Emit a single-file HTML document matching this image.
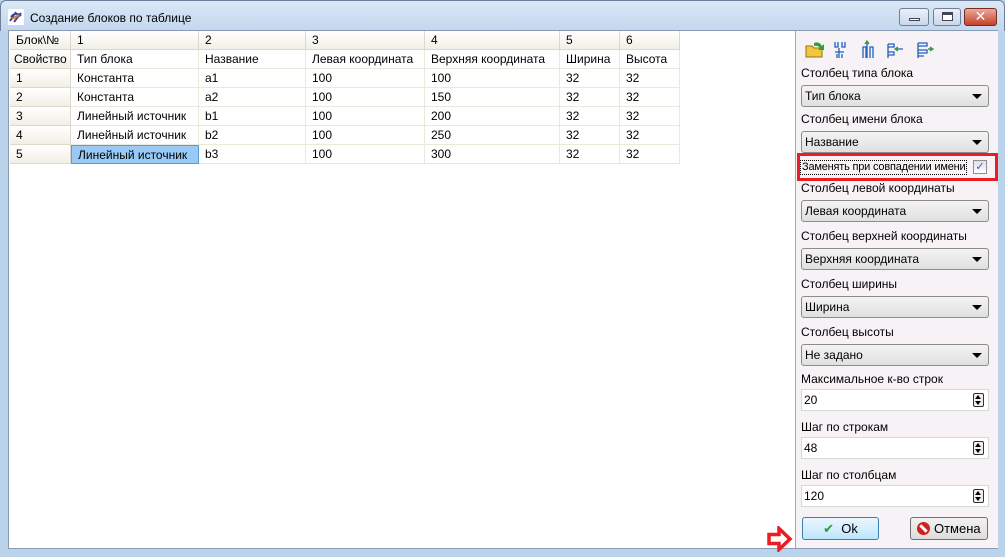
<!DOCTYPE html>
<html><head><meta charset="utf-8"><style>
*{margin:0;padding:0;box-sizing:border-box}
body{width:1005px;height:557px;overflow:hidden;background:#bcd3ec;font-family:"Liberation Sans","DejaVu Sans",sans-serif;font-size:12px;color:#000;position:relative}
.a{position:absolute}
.title{left:0;top:0;width:1005px;height:31px;background:linear-gradient(#dbe8f6,#c2d7ee);border:1px solid #6d7f99;border-bottom:none;border-radius:6px 6px 0 0}
.client{left:8px;top:30px;width:990px;height:519px;background:#fff;border:1px solid #8a9bb3}
.cell{position:absolute;height:19px;line-height:18px;padding-left:6px;border-right:1px solid #ece8dc;border-bottom:1px solid #ece8dc;white-space:nowrap;overflow:hidden}
.hd{background:linear-gradient(#fff,#f1efe6);border-right:1px solid #dcd8cc;border-bottom:1px solid #dcd8cc}
.panel{left:795px;top:31px;width:203px;height:517px;background:#f6f2f5;border-left:1px solid #a8a8a8}
.lbl{position:absolute;left:801px}
.cb{position:absolute;left:801px;width:188px;height:22px;border:1px solid #8c8c8c;border-radius:3px;background:linear-gradient(#f4f4f4,#e0e0e0);line-height:20px;padding-left:3px}
.cb:after{content:"";position:absolute;right:6px;top:8px;border:5px solid transparent;border-top:5px solid #000;border-bottom:0}
.sp{position:absolute;left:801px;width:188px;height:22px;border:1px solid #d8d8d8;background:#fff;line-height:20px;padding-left:2px}
.sp i{position:absolute;right:4px;top:3px;width:11px;height:14px;border:1px solid #333;border-radius:2px;background:#eee}
.sp i:before{content:"";position:absolute;left:1px;top:1px;border:3.5px solid transparent;border-bottom:4px solid #000;border-top:0}
.sp i:after{content:"";position:absolute;left:1px;top:7px;border:3.5px solid transparent;border-top:4px solid #000;border-bottom:0}
.btn{position:absolute;top:517px;height:23px;border:1px solid #707070;border-radius:3px;text-align:center;line-height:21px;font-size:13px}
.wb{position:absolute;top:8px;height:18px;border:1px solid #6e7f96;border-radius:3px;background:linear-gradient(#eaf1f9,#c8d8ea)}
</style></head><body>
<div class="a title"></div>
<svg class="a" style="left:8px;top:9px" width="16" height="16" viewBox="0 0 16 16"><rect width="16" height="16" fill="#fff"/><path d="M2 12 L8 3 M6 13 L13 4 M3 8 C6 4 10 4 13 7" stroke="#3b47a8" stroke-width="2" fill="none"/><path d="M4 10 L11 6" stroke="#e08020" stroke-width="2"/></svg>
<div class="a" style="left:30px;top:11px;font-size:12px">Создание блоков по таблице</div>
<div class="wb" style="left:899px;width:30px"><div class="a" style="left:9px;top:9px;width:11px;height:3px;background:#fff;border:1px solid #445"></div></div>
<div class="wb" style="left:933px;width:28px"><div class="a" style="left:8px;top:3px;width:11px;height:9px;border:1px solid #445;border-top-width:3px;background:#fff"></div></div>
<div class="wb" style="left:964px;width:33px;background:linear-gradient(#e9a99a,#c5402a);border-color:#7a2a20;color:#fff;text-align:center;font-weight:bold;line-height:15px;font-size:14px">✕</div>
<div class="a client"></div>

<div class="a" style="left:10px;top:31px;width:784px;height:516px">
<div class="cell hd" style="left:0;top:0;width:61px">Блок\№</div>
<div class="cell hd" style="left:61px;top:0;width:128px">1</div>
<div class="cell hd" style="left:189px;top:0;width:107px">2</div>
<div class="cell hd" style="left:296px;top:0;width:119px">3</div>
<div class="cell hd" style="left:415px;top:0;width:135px">4</div>
<div class="cell hd" style="left:550px;top:0;width:60px">5</div>
<div class="cell hd" style="left:610px;top:0;width:60px">6</div>
<div class="cell hd" style="left:0;top:19px;width:61px;padding-left:4px">Свойство</div>
<div class="cell" style="left:61px;top:19px;width:128px">Тип блока</div>
<div class="cell" style="left:189px;top:19px;width:107px">Название</div>
<div class="cell" style="left:296px;top:19px;width:119px">Левая координата</div>
<div class="cell" style="left:415px;top:19px;width:135px">Верхняя координата</div>
<div class="cell" style="left:550px;top:19px;width:60px">Ширина</div>
<div class="cell" style="left:610px;top:19px;width:60px">Высота</div>

<div class="cell hd" style="left:0;top:38px;width:61px">1</div><div class="cell" style="left:61px;top:38px;width:128px">Константа</div><div class="cell" style="left:189px;top:38px;width:107px">a1</div><div class="cell" style="left:296px;top:38px;width:119px">100</div><div class="cell" style="left:415px;top:38px;width:135px">100</div><div class="cell" style="left:550px;top:38px;width:60px">32</div><div class="cell" style="left:610px;top:38px;width:60px">32</div>
<div class="cell hd" style="left:0;top:57px;width:61px">2</div><div class="cell" style="left:61px;top:57px;width:128px">Константа</div><div class="cell" style="left:189px;top:57px;width:107px">a2</div><div class="cell" style="left:296px;top:57px;width:119px">100</div><div class="cell" style="left:415px;top:57px;width:135px">150</div><div class="cell" style="left:550px;top:57px;width:60px">32</div><div class="cell" style="left:610px;top:57px;width:60px">32</div>
<div class="cell hd" style="left:0;top:76px;width:61px">3</div><div class="cell" style="left:61px;top:76px;width:128px">Линейный источник</div><div class="cell" style="left:189px;top:76px;width:107px">b1</div><div class="cell" style="left:296px;top:76px;width:119px">100</div><div class="cell" style="left:415px;top:76px;width:135px">200</div><div class="cell" style="left:550px;top:76px;width:60px">32</div><div class="cell" style="left:610px;top:76px;width:60px">32</div>
<div class="cell hd" style="left:0;top:95px;width:61px">4</div><div class="cell" style="left:61px;top:95px;width:128px">Линейный источник</div><div class="cell" style="left:189px;top:95px;width:107px">b2</div><div class="cell" style="left:296px;top:95px;width:119px">100</div><div class="cell" style="left:415px;top:95px;width:135px">250</div><div class="cell" style="left:550px;top:95px;width:60px">32</div><div class="cell" style="left:610px;top:95px;width:60px">32</div>
<div class="cell hd" style="left:0;top:114px;width:61px">5</div><div class="cell" style="left:61px;top:114px;width:128px;background:#99c9f5;border:1px solid #5a9ad8">Линейный источник</div><div class="cell" style="left:189px;top:114px;width:107px">b3</div><div class="cell" style="left:296px;top:114px;width:119px">100</div><div class="cell" style="left:415px;top:114px;width:135px">300</div><div class="cell" style="left:550px;top:114px;width:60px">32</div><div class="cell" style="left:610px;top:114px;width:60px">32</div>
</div>

<div class="a panel"></div>
<svg class="a" style="left:804px;top:38px" width="150" height="22" viewBox="0 0 150 22">
<path d="M2 8 h6 l2 2 h8 v9 H2z" fill="#f0c840" stroke="#a07010"/><path d="M10 5 q5 -2 8 3 l2 -2 v6 h-6 l2 -2 q-2 -3 -6 -2z" fill="#30a030"/>
<g stroke="#2060c0" stroke-width="1.3" fill="none"><path d="M31 4v5h3V4 M38 4v5h3V4 M35 10v10 M31 14h9 M33 20v-4 M38 20v-4"/>
<path d="M59 20V9h3v11 M66 20V9h3v11 M63 5v15"/><path d="M61 6l2-3 2 3" fill="#30a030" stroke="#30a030"/>
<path d="M84 6h6v3h-6 M84 14h6v3h-6 M84 6v14 M94 11h5"/><path d="M94 9l-3 2 3 2" fill="#30a030" stroke="#30a030"/>
<path d="M114 5h9v3h-9 M114 12h9v3h-9 M114 18h6 M114 5v15 M124 11h3"/><path d="M126 9l3 2-3 2" fill="#30a030" stroke="#30a030"/></g></svg>

<div class="lbl" style="top:66px">Столбец типа блока</div>
<div class="cb" style="top:85px">Тип блока</div>
<div class="lbl" style="top:112px">Столбец имени блока</div>
<div class="cb" style="top:131px">Название</div>
<div class="a" style="left:797px;top:153px;width:201px;height:28px;border:3px solid #ec1c24"></div>
<div class="lbl" style="top:160px;left:800px;border:1px dotted #000;padding:0 1px;line-height:13px;font-size:11px;letter-spacing:-0.2px;white-space:nowrap">Заменять при совпадении имени</div>
<div class="a" style="left:973px;top:160px;width:14px;height:14px;border:1px solid #8e8f8f;background:linear-gradient(#dde,#fff);color:#4a5a8a;font-size:11px;line-height:12px;text-align:center">✓</div>
<div class="lbl" style="top:181px">Столбец левой координаты</div>
<div class="cb" style="top:200px">Левая координата</div>
<div class="lbl" style="top:229px">Столбец верхней координаты</div>
<div class="cb" style="top:248px">Верхняя координата</div>
<div class="lbl" style="top:277px">Столбец ширины</div>
<div class="cb" style="top:296px">Ширина</div>
<div class="lbl" style="top:325px">Столбец высоты</div>
<div class="cb" style="top:344px">Не задано</div>
<div class="lbl" style="top:372px">Максимальное к-во строк</div>
<div class="sp" style="top:389px">20<i></i></div>
<div class="lbl" style="top:420px">Шаг по строкам</div>
<div class="sp" style="top:437px">48<i></i></div>
<div class="lbl" style="top:468px">Шаг по столбцам</div>
<div class="sp" style="top:485px">120<i></i></div>
<div class="btn" style="left:802px;width:77px;border-color:#3c7fb1;background:linear-gradient(#eaf6fd,#bee6fd)"><span style="color:#2aa02a;font-weight:bold">✔</span>&nbsp; Ok</div>
<div class="btn" style="left:910px;width:78px;background:linear-gradient(#f2f2f2,#dcdcdc)"><span style="display:inline-block;width:13px;height:13px;border-radius:50%;background:#d02020;vertical-align:-2px;position:relative"><span style="position:absolute;left:2px;top:5px;width:9px;height:3px;background:#fff;transform:rotate(45deg)"></span></span> Отмена</div>
<svg class="a" style="left:767px;top:526px" width="26" height="26" viewBox="0 0 26 26"><path d="M2 8.5h10v-6l11 10.5-11 10.5v-6h-10z" fill="none" stroke="#ec1c24" stroke-width="3.5"/></svg>
</body></html>
